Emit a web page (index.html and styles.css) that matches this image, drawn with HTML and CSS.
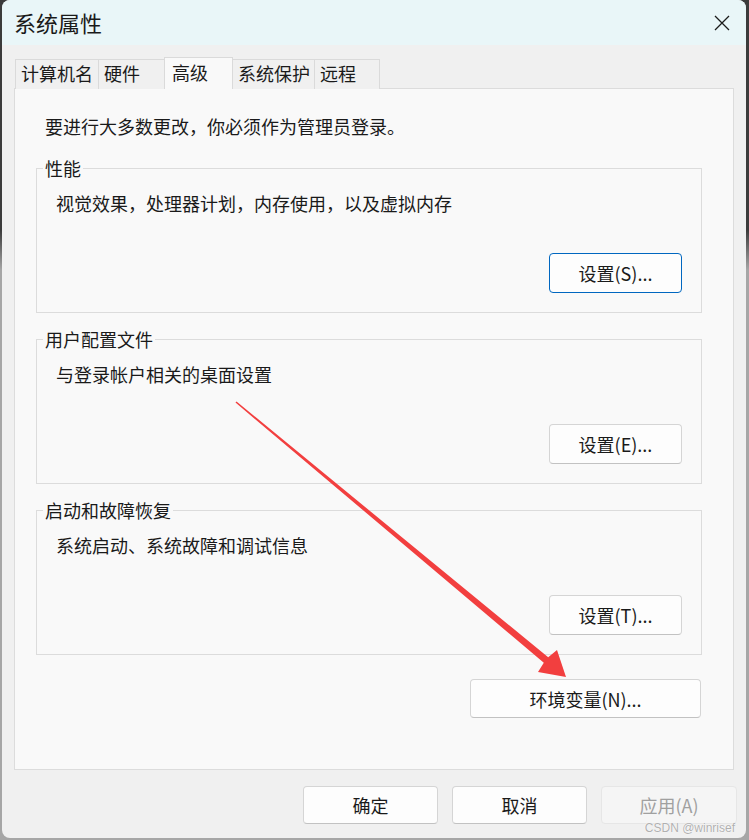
FILE: index.html
```html
<!DOCTYPE html>
<html lang="zh-CN">
<head>
    <meta charset="UTF-8">
    <title>系统属性</title>
    <link rel="stylesheet" href="styles.css">
</head>
<body>
    <div class="window">
        <div class="titlebar">
            <span class="title">系统属性</span>
            <span class="close">
                <svg width="16" height="16" viewBox="0 0 16 16">
                    <path d="M1 1 L15 15 M15 1 L1 15" stroke="#1b1b1b" stroke-width="1.3" fill="none"/>
                </svg>
            </span>
        </div>

        <div class="content">
            <!-- Tabs -->
            <div class="tabs">
                <div class="tab tab-name">计算机名</div>
                <div class="tab tab-hw">硬件</div>
                <div class="tab tab-adv active">高级</div>
                <div class="tab tab-prot">系统保护</div>
                <div class="tab tab-remote">远程</div>
            </div>

            <div class="tab-panel">
                <p class="intro">要进行大多数更改，你必须作为管理员登录。</p>

                <fieldset class="group">
                    <legend>性能</legend>
                    <p class="desc">视觉效果，处理器计划，内存使用，以及虚拟内存</p>
                    <div class="group-actions">
                        <button class="btn btn-default">设置(S)...</button>
                    </div>
                </fieldset>

                <fieldset class="group">
                    <legend>用户配置文件</legend>
                    <p class="desc">与登录帐户相关的桌面设置</p>
                    <div class="group-actions">
                        <button class="btn">设置(E)...</button>
                    </div>
                </fieldset>

                <fieldset class="group">
                    <legend>启动和故障恢复</legend>
                    <p class="desc">系统启动、系统故障和调试信息</p>
                    <div class="group-actions">
                        <button class="btn">设置(T)...</button>
                    </div>
                </fieldset>

                <div class="env-row">
                    <button class="btn btn-env">环境变量(N)...</button>
                </div>
            </div>

            <!-- Dialog buttons -->
            <div class="footer">
                <button class="btn btn-footer">确定</button>
                <button class="btn btn-footer">取消</button>
                <button class="btn btn-footer" disabled>应用(A)</button>
            </div>
        </div>
    </div>

    <!-- annotation arrow drawn over the dialog -->
    <svg class="arrow" width="749" height="840" viewBox="0 0 749 840">
        <polygon points="236.5,401.4 548.2,657.3 557,650 566,677 538,672 543.8,662.7 235.5,402.6" fill="#f23f3f"/>
    </svg>

    <div class="watermark">CSDN @winrisef</div>
</body>
</html>
```

FILE: styles.css
```css
/* Global */
body {
    margin: 0;
    width: 749px;
    height: 840px;
    position: relative;
    overflow: hidden;
    font-family: "Noto Sans CJK SC", "Microsoft YaHei", sans-serif;
    color: #1a1a1a;
    background: linear-gradient(to bottom, #3b3b3b 0, #3b3b3b 230px, #a6a6a6 270px, #a6a6a6 100%);
}

.window {
    margin-left: 2px;
    width: 744px;
    height: 838px;
    background: #f0f0f0;
    border-radius: 8px;
    overflow: hidden;
    box-sizing: border-box;
}

/* Title bar */
.titlebar {
    height: 45px;
    background: #e9f6f8;
    display: flex;
    align-items: center;
    justify-content: space-between;
    padding: 0 16px 0 12px;
}

.title {
    font-size: 22px;
    line-height: 45px;
}

.close {
    display: flex;
    width: 16px;
    height: 16px;
    margin-top: 1px;
}

/* Content */
.content {
    padding: 12px 12px 0 12px;
}

.tabs {
    display: flex;
    align-items: flex-end;
    height: 32px;
    margin-left: 1px;
    margin-bottom: -1px;
    position: relative;
    z-index: 1;
}

.tab {
    box-sizing: border-box;
    height: 30px;
    padding-left: 5px;
    font-size: 18px;
    line-height: 27px;
    border: 1px solid #dadada;
    border-bottom: none;
    background: #f0f0f0;
    margin-left: -1px;
    white-space: nowrap;
}

.tab:first-child {
    margin-left: 0;
}

.tab-name { width: 84px; }
.tab-hw { width: 67px; }
.tab-adv { width: 69px; }
.tab-prot { width: 83px; }
.tab-remote { width: 66px; }

.tab.active {
    height: 32px;
    padding-left: 7px;
    line-height: 28px;
    background: #f9f9f9;
    position: relative;
    z-index: 2;
}

.tab-panel {
    height: 682px;
    box-sizing: border-box;
    border: 1px solid #dcdcdc;
    background: #f9f9f9;
    padding: 25px 31px 0 21px;
}

.intro {
    margin: 0 0 18px 9px;
    font-size: 18px;
    line-height: 24px;
}

/* Group boxes */
.group {
    margin: 0 0 14px 0;
    padding: 11px 19px 19px 6px;
    border: 1px solid #dcdcdc;
    min-width: 0;
}

.group legend {
    padding: 0 2px;
    font-size: 18px;
    line-height: 24px;
}

.desc {
    margin: 0 0 0 13px;
    font-size: 18px;
    line-height: 24px;
}

.group-actions {
    display: flex;
    justify-content: flex-end;
    margin-top: 38px;
}

/* Buttons */
.btn {
    box-sizing: border-box;
    width: 133px;
    height: 40px;
    padding: 0;
    font-family: inherit;
    font-size: 18px;
    color: #1a1a1a;
    background: #fdfdfd;
    border: 1px solid #d5d5d5;
    border-bottom-color: #c2c2c2;
    border-radius: 4px;
}

.btn-default {
    border: 1px solid #0067c0;
}

.env-row {
    display: flex;
    justify-content: flex-end;
    padding-right: 1px;
    margin-top: 24px;
}

.btn-env {
    width: 231px;
    height: 39px;
}

.footer {
    display: flex;
    justify-content: flex-end;
    gap: 14px;
    margin: 16px -3px 0 0;
}

.btn-footer {
    width: 135px;
    height: 38px;
}

.btn-footer:disabled {
    width: 136px;
    color: #a0a0a0;
    background: #f5f5f5;
    border-color: #e6e6e6;
}

/* Overlays */
.arrow {
    position: absolute;
    top: 0;
    left: 0;
    pointer-events: none;
}

.watermark {
    position: absolute;
    right: 14px;
    bottom: 5px;
    font-family: "Liberation Sans", Arial, sans-serif;
    font-size: 12px;
    color: #b0b0b0;
    text-shadow: 0 0 1px #ffffff, 0 0 1px #ffffff;
}
```
